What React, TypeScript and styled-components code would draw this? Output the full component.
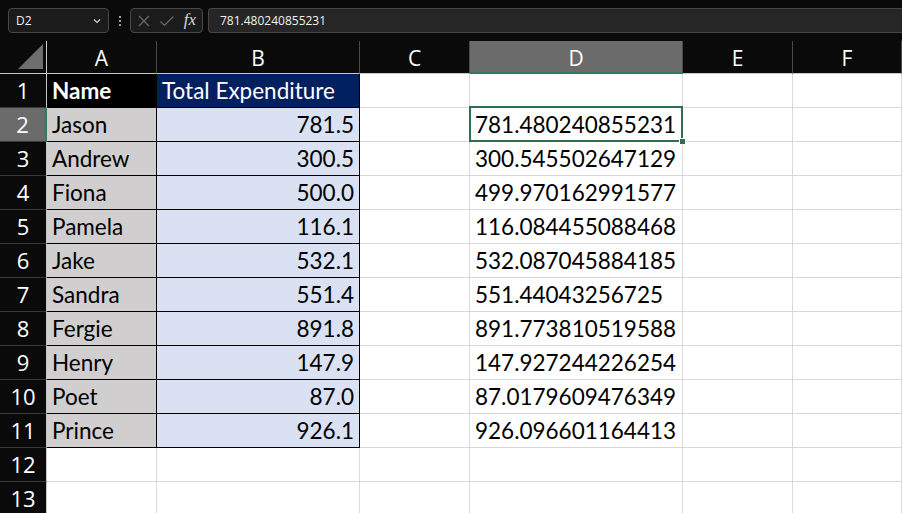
import React from 'react';
import styled, { createGlobalStyle, css } from 'styled-components';

const GlobalStyle = createGlobalStyle`
  html, body {
    margin: 0;
    padding: 0;
    background: #0a0a0a;
    overflow: hidden;
  }
  body {
    font-family: "Lato", "Open Sans", "Liberation Sans", sans-serif;
  }
`;

const Page = styled.div`
  width: 902px;
  height: 513px;
  overflow: hidden;
  background: #ffffff;
`;

const FormulaBar = styled.div`
  height: 41px;
  background: #0a0a0a;
  display: flex;
  align-items: flex-start;
  padding: 8px 0 0 8px;
  box-sizing: border-box;
  font-family: "Open Sans", "Liberation Sans", sans-serif;
`;

const NameBox = styled.div`
  width: 101px;
  height: 25px;
  box-sizing: border-box;
  background: #1b1b1b;
  border: 1px solid #474747;
  border-radius: 4px;
  display: flex;
  align-items: center;
  justify-content: space-between;
  padding: 0 6px 0 7px;
  color: #f0f0f0;
  font-size: 12px;
`;

const Dots = styled.div`
  width: 21px;
  height: 25px;
  display: flex;
  flex-direction: column;
  align-items: center;
  justify-content: center;
  gap: 2px;
  span {
    width: 2px;
    height: 2px;
    background: #d0d0d0;
    border-radius: 1px;
  }
`;

const FxGroup = styled.div`
  width: 73px;
  height: 25px;
  box-sizing: border-box;
  background: #1b1b1b;
  border: 1px solid #474747;
  border-radius: 4px;
  display: flex;
  align-items: center;
  padding: 0 6px;
  gap: 8px;
`;

const Fx = styled.span`
  font-family: "Liberation Serif", "DejaVu Serif", serif;
  font-style: italic;
  font-size: 17px;
  color: #d8d8d8;
  margin-left: 1px;
  margin-top: -2px;
`;

const FormulaInput = styled.div`
  flex: 1;
  height: 25px;
  margin-left: 5px;
  box-sizing: border-box;
  background: #262626;
  border: 1px solid #474747;
  border-right: none;
  border-radius: 4px 0 0 4px;
  display: flex;
  align-items: center;
  padding-left: 11px;
  color: #f0f0f0;
  font-size: 12px;
`;

const Sheet = styled.div`
  display: grid;
  grid-template-columns: 47px 110px 203px 110px 213px 110px 1fr;
  grid-template-rows: 33px repeat(13, 34px);
`;

const headBase = css`
  background: #0a0a0a;
  color: #ffffff;
  display: flex;
  align-items: center;
  justify-content: center;
  box-sizing: border-box;
  font-family: "Open Sans", "Liberation Sans", sans-serif;
  font-size: 21px;
`;

const Corner = styled.div`
  ${headBase};
  border-right: 1px solid #c8c8c8;
  border-bottom: 1px solid #c8c8c8;
  align-items: flex-end;
  justify-content: flex-end;
  padding: 0 3px 4px 0;
`;

const ColHead = styled.div<{ $selected?: boolean }>`
  ${headBase};
  border-right: 1px solid #4a4a4a;
  border-bottom: 1px solid #c8c8c8;
  padding-top: 2px;
  ${(p) =>
    p.$selected &&
    css`
      background: #6b6b6b;
      border-bottom: 2px solid #2f7d5a;
    `}
`;

const RowHead = styled.div<{ $selected?: boolean }>`
  ${headBase};
  border-right: 1px solid #c8c8c8;
  border-bottom: 1px solid #3a3a3a;
  font-size: 22px;
  padding-bottom: 1px;
  ${(p) =>
    p.$selected &&
    css`
      background: #6b6b6b;
      border-right: 2px solid #2f7d5a;
    `}
`;

type Kind = 'nameHead' | 'valueHead' | 'name' | 'value' | 'plain';

const kindStyles: Record<Kind, ReturnType<typeof css>> = {
  nameHead: css`
    background: #000000;
    color: #ffffff;
    font-weight: 700;
    border-right-color: #000;
    border-bottom-color: #000;
  `,
  valueHead: css`
    background: #002060;
    color: #ffffff;
    border-right-color: #000;
    border-bottom-color: #000;
  `,
  name: css`
    background: #d0cece;
    border-right-color: #000;
    border-bottom-color: #000;
  `,
  value: css`
    background: #d9e1f2;
    border-right-color: #000;
    border-bottom-color: #000;
    justify-content: flex-end;
  `,
  plain: css``,
};

const Cell = styled.div<{ $kind: Kind }>`
  position: relative;
  box-sizing: border-box;
  background: #ffffff;
  color: #000000;
  border-right: 1px solid #d9d9d9;
  border-bottom: 1px solid #d9d9d9;
  display: flex;
  align-items: center;
  justify-content: flex-start;
  padding: 0 5px 1px 5px;
  font-size: 22.5px;
  white-space: nowrap;
  ${(p) => kindStyles[p.$kind]};
`;

const Selection = styled.div`
  position: absolute;
  z-index: 2;
  left: -1px;
  top: -2px;
  right: -1px;
  bottom: -1px;
  border: 2px solid #2f6e4f;
  pointer-events: none;
  &::after {
    content: '';
    position: absolute;
    right: -5px;
    bottom: -5px;
    width: 7px;
    height: 7px;
    background: #2f6e4f;
    border: 1px solid #ffffff;
    box-sizing: border-box;
  }
`;

const people: [string, string, string][] = [
  ['Jason', '781.5', '781.480240855231'],
  ['Andrew', '300.5', '300.545502647129'],
  ['Fiona', '500.0', '499.970162991577'],
  ['Pamela', '116.1', '116.084455088468'],
  ['Jake', '532.1', '532.087045884185'],
  ['Sandra', '551.4', '551.44043256725'],
  ['Fergie', '891.8', '891.773810519588'],
  ['Henry', '147.9', '147.927244226254'],
  ['Poet', '87.0', '87.0179609476349'],
  ['Prince', '926.1', '926.096601164413'],
];

const columns = ['A', 'B', 'C', 'D', 'E', 'F'];

const Chevron = () => (
  <svg width="10" height="10" viewBox="0 0 10 10">
    <path d="M2 3.5 L5 6.5 L8 3.5" fill="none" stroke="#d0d0d0" strokeWidth="1.2" />
  </svg>
);

const CrossIcon = () => (
  <svg width="14" height="14" viewBox="0 0 14 14">
    <path d="M2 2 L12 12 M12 2 L2 12" stroke="#6a6a6a" strokeWidth="1.2" />
  </svg>
);

const CheckIcon = () => (
  <svg width="16" height="14" viewBox="0 0 16 14">
    <path d="M1.5 7.5 L5.5 11.5 L14.5 2.5" fill="none" stroke="#6a6a6a" strokeWidth="1.2" />
  </svg>
);

const CornerTriangle = () => (
  <svg width="25" height="25" viewBox="0 0 25 25">
    <path d="M25 0 L25 25 L0 25 Z" fill="#6e6e6e" />
  </svg>
);

export default function App() {
  return (
    <Page>
      <GlobalStyle />
      <FormulaBar>
        <NameBox>
          <span>D2</span>
          <Chevron />
        </NameBox>
        <Dots>
          <span />
          <span />
          <span />
        </Dots>
        <FxGroup>
          <CrossIcon />
          <CheckIcon />
          <Fx>fx</Fx>
        </FxGroup>
        <FormulaInput>781.480240855231</FormulaInput>
      </FormulaBar>
      <Sheet>
        <Corner>
          <CornerTriangle />
        </Corner>
        {columns.map((c) => (
          <ColHead key={c} $selected={c === 'D'}>
            {c}
          </ColHead>
        ))}

        <RowHead>1</RowHead>
        <Cell $kind="nameHead">Name</Cell>
        <Cell $kind="valueHead">Total Expenditure</Cell>
        <Cell $kind="plain" />
        <Cell $kind="plain" />
        <Cell $kind="plain" />
        <Cell $kind="plain" />

        {people.map(([name, total, raw], i) => (
          <React.Fragment key={name}>
            <RowHead $selected={i === 0}>{i + 2}</RowHead>
            <Cell $kind="name">{name}</Cell>
            <Cell $kind="value">{total}</Cell>
            <Cell $kind="plain" />
            <Cell $kind="plain">
              {raw}
              {i === 0 && <Selection />}
            </Cell>
            <Cell $kind="plain" />
            <Cell $kind="plain" />
          </React.Fragment>
        ))}

        {[12, 13].map((n) => (
          <React.Fragment key={n}>
            <RowHead>{n}</RowHead>
            {columns.map((c) => (
              <Cell key={c} $kind="plain" />
            ))}
          </React.Fragment>
        ))}
      </Sheet>
    </Page>
  );
}
